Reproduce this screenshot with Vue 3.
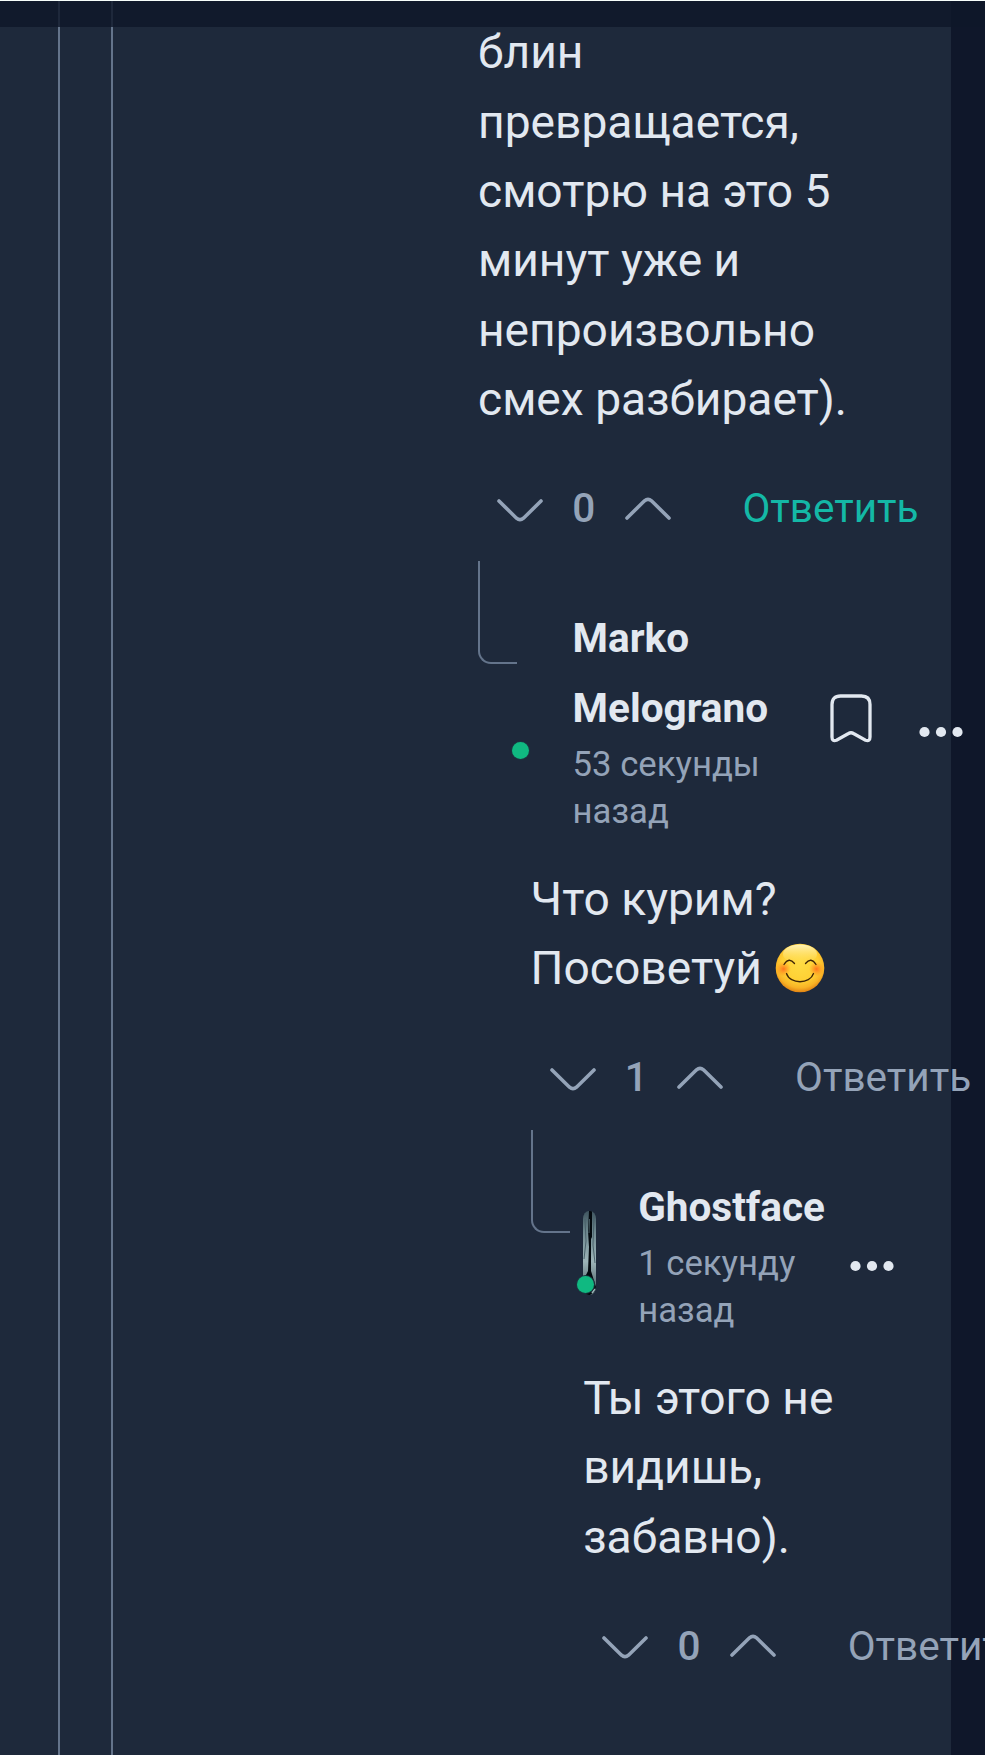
<template>
  <div class="page">
    <div class="topbar"></div>
    <main class="panel">
      <div class="thread thread--outer">
        <div class="thread thread--inner">
          <article
            v-for="comment in comments"
            :key="comment.id"
            class="comment"
            :style="{ marginLeft: `${comment.depth * 52.6}px` }"
          >
            <header v-if="comment.author" class="comment__header">
              <span class="comment__branch"></span>
              <div class="avatar">
                <svg v-if="comment.avatar" class="avatar__image" width="13" height="84" viewBox="0 0 13 84">
                  <defs>
                    <linearGradient id="avatarTone" x1="0" y1="0" x2="0" y2="1">
                      <stop offset="0" stop-color="#3f555f" />
                      <stop offset="0.25" stop-color="#6f8990" />
                      <stop offset="0.6" stop-color="#9db4b8" />
                      <stop offset="1" stop-color="#41565c" />
                    </linearGradient>
                    <clipPath id="avatarClip">
                      <rect width="13" height="84" rx="6" ry="8" />
                    </clipPath>
                  </defs>
                  <g clip-path="url(#avatarClip)">
                    <rect width="13" height="84" fill="url(#avatarTone)" />
                    <path d="M2 8L3 30L1 48M11 4L10 34L12 52" fill="none" stroke="#4a626b" stroke-width="1" />
                    <path d="M6 0L9 0L9 26L8 28L8 60L13 76L12 80L7 84L0 84L2 66L5 60L6 36L5 20Z" fill="#03090e" />
                    <path d="M6.500 8L6 22" stroke="#587079" stroke-width="0.800" />
                    <path d="M9 82L12 78" stroke="#9db4b8" stroke-width="1.500" />
                  </g>
                </svg>
                <span class="avatar__status"></span>
              </div>
              <div class="comment__info">
                <div class="comment__author">{{ comment.author }}</div>
                <div class="comment__time">{{ comment.time }}</div>
              </div>
              <svg v-if="comment.bookmark" class="bookmark" width="42" height="49" viewBox="0 0 42 49">
                <path
                  d="M10.500 2H31.500Q40 2 40 10.500V43Q40 47.800 35.500 46.300L23.500 39.500Q21 38 18.500 39.500L6.500 46.300Q2 47.800 2 43V10.500Q2 2 10.500 2Z"
                />
              </svg>
              <svg class="dots" width="44" height="12" viewBox="0 0 44 12">
                <circle cx="5.500" cy="6" r="5.100" />
                <circle cx="22" cy="6" r="5.100" />
                <circle cx="38.500" cy="6" r="5.100" />
              </svg>
            </header>
            <div class="comment__text">
              <div v-for="line in comment.lines" :key="line">
                {{ line }}
                <svg v-if="comment.emoji === line" class="emoji" width="50" height="50" viewBox="0 0 50 50">
                  <defs>
                    <radialGradient id="face" cx="0.5" cy="0.4" r="0.62">
                      <stop offset="0" stop-color="#ffdc43" />
                      <stop offset="0.6" stop-color="#ffd034" />
                      <stop offset="0.82" stop-color="#f9b325" />
                      <stop offset="1" stop-color="#dc7810" />
                    </radialGradient>
                    <linearGradient id="shine" x1="0" y1="0" x2="0" y2="1">
                      <stop offset="0" stop-color="#fff3b8" />
                      <stop offset="1" stop-color="#ffe36a" stop-opacity="0" />
                    </linearGradient>
                    <radialGradient id="blush">
                      <stop offset="0" stop-color="#ff6a1c" stop-opacity="0.9" />
                      <stop offset="1" stop-color="#ff8a1c" stop-opacity="0" />
                    </radialGradient>
                  </defs>
                  <circle cx="25" cy="25" r="24.300" fill="url(#face)" />
                  <ellipse cx="25" cy="11" rx="17" ry="9.500" fill="url(#shine)" />
                  <circle cx="8.500" cy="26" r="7.500" fill="url(#blush)" />
                  <circle cx="41.500" cy="26" r="7.500" fill="url(#blush)" />
                  <g fill="none" stroke="#3f2506" stroke-width="1.300" stroke-linecap="round">
                    <path d="M9 21.500Q14 13.500 19.500 20.500M30.500 20.500Q36 13.500 41 21.500" />
                    <path d="M11.500 30.500C15 41.500 35 41.500 38.500 30.500" />
                  </g>
                </svg>
              </div>
            </div>
            <footer class="comment__footer">
              <svg class="chevron" width="46" height="24" viewBox="0 0 46 24">
                <path d="M2 2L19.500 19.200Q23 22.200 26.500 19.200L44 2" />
              </svg>
              <span class="comment__rating">{{ comment.rating }}</span>
              <svg class="chevron chevron--up" width="46" height="24" viewBox="0 0 46 24">
                <path d="M2 22L19.500 4.800Q23 1.800 26.500 4.800L44 22" />
              </svg>
              <a class="comment__reply" :class="{ 'comment__reply--active': comment.active }">Ответить</a>
            </footer>
          </article>
        </div>
      </div>
    </main>
  </div>
</template>

<script setup>
  import { ref } from 'vue';

  const comments = ref([
    {
      id: 1,
      depth: 0,
      lines: ['блин', 'превращается,', 'смотрю на это 5', 'минут уже и', 'непроизвольно', 'смех разбирает).'],
      rating: 0,
      active: true,
    },
    {
      id: 2,
      depth: 1,
      author: 'Marko Melograno',
      time: '53 секунды назад',
      bookmark: true,
      lines: ['Что курим?', 'Посоветуй'],
      emoji: 'Посоветуй',
      rating: 1,
    },
    {
      id: 3,
      depth: 2,
      author: 'Ghostface',
      time: '1 секунду назад',
      avatar: true,
      lines: ['Ты этого не', 'видишь,', 'забавно).'],
      rating: 0,
    },
  ]);
</script>

<style>
  body {
    margin: 0;
    background: #0f172a;
  }
</style>

<style scoped>
  .page {
    position: relative;
    width: 985px;
    height: 1755px;
    overflow: hidden;
    background: #0f172a;
    color: #e2e8f0;
    font-family: Roboto, sans-serif;
  }

  .topbar {
    position: absolute;
    top: 0;
    left: 0;
    z-index: 2;
    box-sizing: border-box;
    width: 100%;
    height: 27px;
    border-top: 1px solid #f8fffc;
    background: rgba(15, 23, 42, 0.82);
    background-clip: padding-box;
  }

  .panel {
    display: flex;
    width: 951px;
    height: 1755px;
    background: #1e293b;
  }

  .thread {
    flex: 1;
    min-width: 0;
    border-left: 2px solid #64748b;
  }

  .thread--outer {
    display: flex;
    margin-left: 58px;
  }

  .thread--inner {
    box-sizing: border-box;
    margin-left: 51px;
    padding: 18.3px 0 0 365px;
  }

  .comment {
    white-space: nowrap;
  }

  .comment__header {
    position: relative;
    display: flex;
    align-items: center;
    width: max-content;
    padding-top: 59.4px;
    margin-bottom: 31.1px;
  }

  .comment__branch {
    position: absolute;
    top: 17.6px;
    left: -52.6px;
    box-sizing: border-box;
    width: 39px;
    height: 103px;
    border-bottom: 2px solid #64748b;
    border-left: 2px solid #64748b;
    border-bottom-left-radius: 13px;
  }

  .avatar {
    position: relative;
    height: 84px;
    margin-right: 42px;
  }

  .avatar__image {
    display: block;
  }

  .avatar__status {
    position: absolute;
    right: 2px;
    bottom: 1.5px;
    width: 17px;
    height: 17px;
    border-radius: 50%;
    background: #10b981;
    box-shadow: 0 0 0 1px #1b3640;
  }

  .comment__info {
    width: min-content;
    white-space: normal;
  }

  .comment__author {
    font-size: 40.5px;
    font-weight: 700;
    line-height: 70px;
  }

  .comment__time {
    margin-top: -2px;
    color: #94a3b8;
    font-size: 34.7px;
    line-height: 46.3px;
  }

  .bookmark {
    margin-left: 62px;
    margin-right: 22px;
    fill: none;
    stroke: #e2e8f0;
    stroke-width: 3.3px;
  }

  .dots {
    margin-top: 27px;
    margin-left: 25px;
    fill: #e2e8f0;
  }

  .comment__text {
    font-size: 46.15px;
    line-height: 69.4px;
  }

  .comment__text > div {
    height: 69.4px;
  }

  .emoji {
    margin-left: 2px;
    vertical-align: -9px;
  }

  .comment__footer {
    display: flex;
    align-items: center;
    width: max-content;
    height: 69.4px;
    margin-top: 39.8px;
    padding-left: 19px;
    color: #94a3b8;
    font-size: 40.5px;
    line-height: 69.4px;
  }

  .chevron {
    flex: none;
    margin-top: 3px;
    fill: none;
    stroke: #94a3b8;
    stroke-width: 3.6px;
    stroke-linecap: round;
  }

  .chevron--up {
    margin-top: -3px;
  }

  .comment__rating {
    width: 81.5px;
    font-weight: 500;
    text-align: center;
  }

  .comment__reply {
    margin-left: 72px;
  }

  .comment__reply--active {
    color: #14b8a6;
  }
</style>
